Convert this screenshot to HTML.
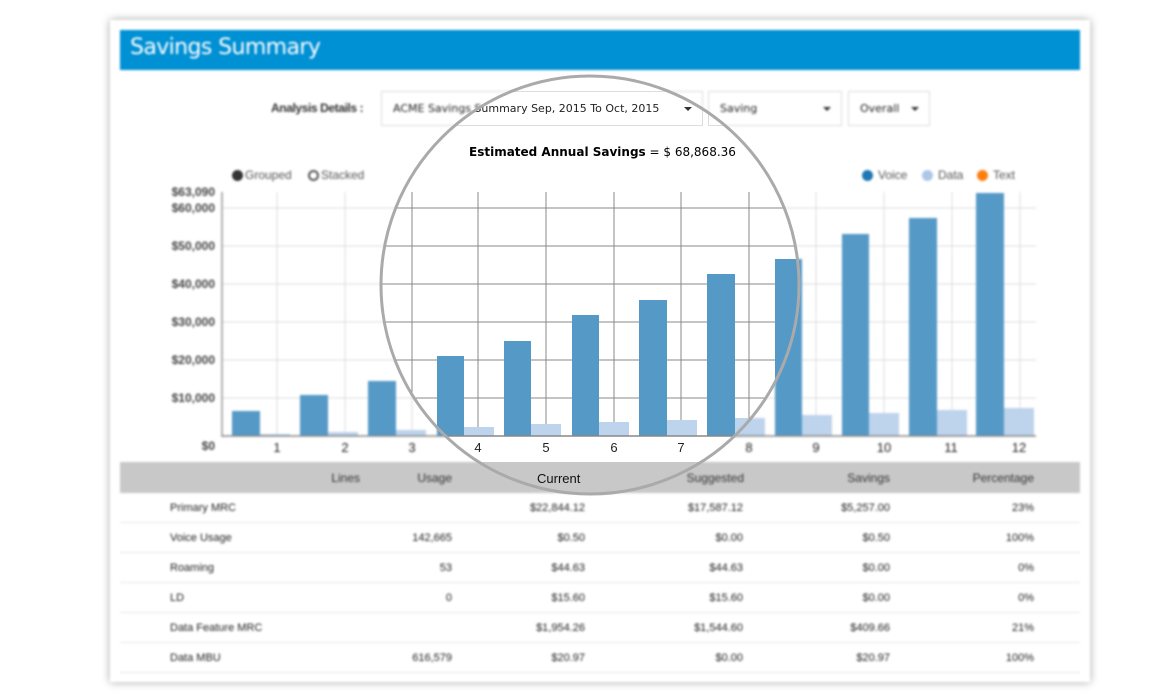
<!DOCTYPE html>
<html><head><meta charset="utf-8">
<style>
*{margin:0;padding:0;box-sizing:border-box}
html,body{width:1170px;height:700px;background:#fff;overflow:hidden;font-family:"Liberation Sans",sans-serif}
.layer{position:absolute;left:0;top:0;width:1170px;height:700px}
#base{filter:blur(1.1px)}
#lens{clip-path:circle(209px at 590px 285px);background:#fff}
.card{position:absolute;left:110px;top:20px;width:980px;height:662px;background:#fff;box-shadow:0 0 8px rgba(0,0,0,.35)}
.hdr{position:absolute;left:120px;top:30px;width:960px;height:40px;background:#0090d4;color:#fff;font-size:22px;padding:5px 0 0 10px;font-family:"DejaVu Sans",sans-serif;letter-spacing:-0.6px}
.t{position:absolute;white-space:nowrap;font-size:12px;color:#333}
.sel{position:absolute;border:1px solid #ddd;height:35px;top:91px;font-family:"DejaVu Sans",sans-serif;font-size:11px;color:#222;padding:10px 0 0 11px}
.sel:after{content:"";position:absolute;right:10px;top:15px;border:4px solid transparent;border-top:4px solid #333}
.thead{position:absolute;left:120px;top:462px;width:960px;height:31px;background:#c8c8c8}
.row{position:absolute;left:120px;width:960px;height:30px;border-bottom:1px solid #e6e6e6}
.r{text-align:right}
.dot{position:absolute;width:11px;height:11px;border-radius:50%}
.c{font-size:11px;color:#222}
</style></head><body>
<div id="base" class="layer">
<div class="card"></div>
<div class="hdr">Savings Summary</div>
<div class="t" style="left:271px;top:101px;font-weight:bold;font-size:12px;letter-spacing:-0.4px">Analysis Details :</div>
<div class="sel" style="left:381px;width:322px">ACME Savings Summary Sep, 2015 To Oct, 2015</div>
<div class="sel" style="left:708px;width:134px">Saving</div>
<div class="sel" style="left:848px;width:82px">Overall</div>
<div class="t" style="left:469px;top:145px;font-family:'DejaVu Sans',sans-serif;color:#000"><b>Estimated Annual Savings</b> = $ 68,868.36</div>
<div class="dot" style="left:232px;top:170px;background:#333"></div>
<div class="t" style="left:245px;top:168px;color:#555">Grouped</div>
<div class="dot" style="left:308px;top:170px;border:2px solid #555"></div>
<div class="t" style="left:321px;top:168px;color:#555">Stacked</div>
<div class="dot" style="left:862px;top:170px;background:#1f77b4"></div>
<div class="t" style="left:878px;top:168px;color:#555">Voice</div>
<div class="dot" style="left:922px;top:170px;background:#aec7e8"></div>
<div class="t" style="left:938px;top:168px;color:#555">Data</div>
<div class="dot" style="left:977px;top:170px;background:#ff7f0e"></div>
<div class="t" style="left:993px;top:168px;color:#555">Text</div>
<svg class="layer" width="1170" height="700" style="font-family:'Liberation Sans',sans-serif">
<g class="grid" stroke="#ddd" stroke-width="1">
<line x1="222" x2="1036" y1="208" y2="208"/><line x1="222" x2="1036" y1="246" y2="246"/><line x1="222" x2="1036" y1="284" y2="284"/><line x1="222" x2="1036" y1="322" y2="322"/><line x1="222" x2="1036" y1="360" y2="360"/><line x1="222" x2="1036" y1="398" y2="398"/>
<line x1="277" x2="277" y1="192" y2="436"/><line x1="345" x2="345" y1="192" y2="436"/><line x1="412" x2="412" y1="192" y2="436"/><line x1="478" x2="478" y1="192" y2="436"/><line x1="546" x2="546" y1="192" y2="436"/><line x1="614" x2="614" y1="192" y2="436"/><line x1="681" x2="681" y1="192" y2="436"/><line x1="749" x2="749" y1="192" y2="436"/><line x1="816" x2="816" y1="192" y2="436"/><line x1="884" x2="884" y1="192" y2="436"/><line x1="952" x2="952" y1="192" y2="436"/><line x1="1020" x2="1020" y1="192" y2="436"/>
</g>
<g fill="#5599c7">
<rect x="232" y="411" width="28" height="25"/><rect x="300" y="395" width="28" height="41"/><rect x="368" y="381" width="28" height="55"/><rect x="437" y="356" width="27" height="80"/><rect x="504" y="341" width="27" height="95"/><rect x="572" y="315" width="27" height="121"/><rect x="639" y="300" width="28" height="136"/><rect x="707" y="274" width="28" height="162"/><rect x="775" y="259" width="27" height="177"/><rect x="842" y="234" width="27" height="202"/><rect x="909" y="218" width="28" height="218"/><rect x="976" y="193" width="28" height="243"/>
</g>
<g fill="#bed3ec">
<rect x="260" y="434" width="30" height="2"/><rect x="328" y="432" width="30" height="4"/><rect x="396" y="430" width="30" height="6"/><rect x="464" y="427" width="30" height="9"/><rect x="531" y="424" width="30" height="12"/><rect x="599" y="422" width="30" height="14"/><rect x="667" y="420" width="30" height="16"/><rect x="735" y="418" width="30" height="18"/><rect x="802" y="415" width="30" height="21"/><rect x="869" y="413" width="30" height="23"/><rect x="937" y="410" width="30" height="26"/><rect x="1004" y="408" width="30" height="28"/>
</g>
<line x1="222" y1="192" x2="222" y2="437" stroke="#999" stroke-width="1.5"/>
<line x1="222" y1="436" x2="1036" y1="436" y2="436" stroke="#888" stroke-width="1.5"/>
<g font-size="12" fill="#444" font-weight="bold" text-anchor="end">
<text x="215" y="196">$63,090</text><text x="215" y="212">$60,000</text><text x="215" y="250">$50,000</text><text x="215" y="288">$40,000</text><text x="215" y="326">$30,000</text><text x="215" y="364">$20,000</text><text x="215" y="402">$10,000</text><text x="215" y="450">$0</text>
</g>
<g font-size="13" fill="#222" text-anchor="middle">
<text x="277" y="452">1</text><text x="345" y="452">2</text><text x="412" y="452">3</text><text x="478" y="452">4</text><text x="546" y="452">5</text><text x="614" y="452">6</text><text x="681" y="452">7</text><text x="749" y="452">8</text><text x="816" y="452">9</text><text x="884" y="452">10</text><text x="951" y="452">11</text><text x="1019" y="452">12</text>
</g>
</svg>
<div class="thead"></div>
<div class="t r" style="left:300px;width:60px;top:471px">Lines</div>
<div class="t r" style="left:390px;width:62px;top:471px">Usage</div>
<div class="t" style="left:537px;top:471px;font-size:13px;color:#111">Current</div>
<div class="t r" style="left:660px;width:84px;top:471px">Suggested</div>
<div class="t r" style="left:800px;width:90px;top:471px">Savings</div>
<div class="t r" style="left:940px;width:94px;top:471px">Percentage</div>
<div class="row" style="top:493px"></div><div class="row" style="top:523px"></div><div class="row" style="top:553px"></div><div class="row" style="top:583px"></div><div class="row" style="top:613px"></div><div class="row" style="top:643px"></div>
<div class="t c" style="left:170px;top:502px">Primary MRC</div><div class="t r c" style="left:480px;width:105px;top:502px">$22,844.12</div><div class="t r c" style="left:640px;width:103px;top:502px">$17,587.12</div><div class="t r c" style="left:790px;width:100px;top:502px">$5,257.00</div><div class="t r c" style="left:960px;width:74px;top:502px">23%</div>
<div class="t c" style="left:170px;top:532px">Voice Usage</div><div class="t r c" style="left:380px;width:72px;top:532px">142,665</div><div class="t r c" style="left:480px;width:105px;top:532px">$0.50</div><div class="t r c" style="left:640px;width:103px;top:532px">$0.00</div><div class="t r c" style="left:790px;width:100px;top:532px">$0.50</div><div class="t r c" style="left:960px;width:74px;top:532px">100%</div>
<div class="t c" style="left:170px;top:562px">Roaming</div><div class="t r c" style="left:380px;width:72px;top:562px">53</div><div class="t r c" style="left:480px;width:105px;top:562px">$44.63</div><div class="t r c" style="left:640px;width:103px;top:562px">$44.63</div><div class="t r c" style="left:790px;width:100px;top:562px">$0.00</div><div class="t r c" style="left:960px;width:74px;top:562px">0%</div>
<div class="t c" style="left:170px;top:592px">LD</div><div class="t r c" style="left:380px;width:72px;top:592px">0</div><div class="t r c" style="left:480px;width:105px;top:592px">$15.60</div><div class="t r c" style="left:640px;width:103px;top:592px">$15.60</div><div class="t r c" style="left:790px;width:100px;top:592px">$0.00</div><div class="t r c" style="left:960px;width:74px;top:592px">0%</div>
<div class="t c" style="left:170px;top:622px">Data Feature MRC</div><div class="t r c" style="left:480px;width:105px;top:622px">$1,954.26</div><div class="t r c" style="left:640px;width:103px;top:622px">$1,544.60</div><div class="t r c" style="left:790px;width:100px;top:622px">$409.66</div><div class="t r c" style="left:960px;width:74px;top:622px">21%</div>
<div class="t c" style="left:170px;top:652px">Data MBU</div><div class="t r c" style="left:380px;width:72px;top:652px">616,579</div><div class="t r c" style="left:480px;width:105px;top:652px">$20.97</div><div class="t r c" style="left:640px;width:103px;top:652px">$0.00</div><div class="t r c" style="left:790px;width:100px;top:652px">$20.97</div><div class="t r c" style="left:960px;width:74px;top:652px">100%</div>
</div>
<div id="lens" class="layer"></div>
<svg class="layer" width="1170" height="700"><circle cx="590" cy="285" r="209" fill="none" stroke="#aaa" stroke-width="3"/></svg>
<script>
var l=document.getElementById('lens');
l.innerHTML=document.getElementById('base').innerHTML;
l.querySelectorAll('.grid').forEach(function(g){g.setAttribute('stroke','#888')});
l.querySelectorAll('.card').forEach(function(c){c.style.boxShadow='none'});
</script>
</body></html>
